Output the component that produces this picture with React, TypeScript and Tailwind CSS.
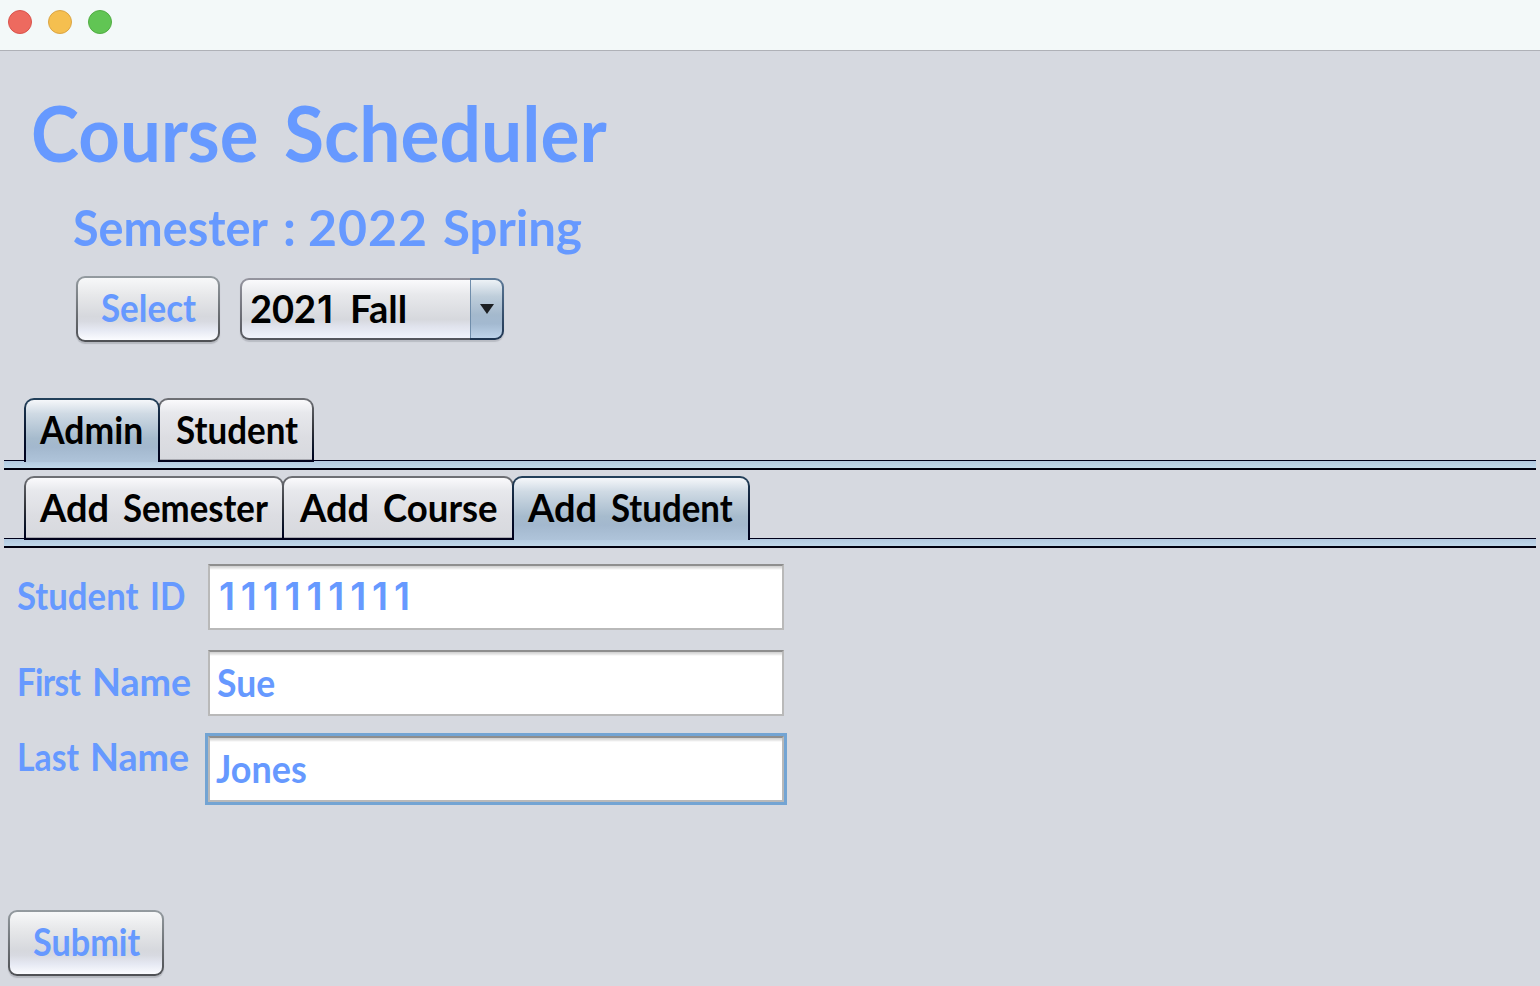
import React from "react";

type Piece = { text: string; cls: string };

function Words({ items }: { items: Piece[] }) {
  return (
    <span className="flex whitespace-pre">
      {items.map((p, i) => (
        <span key={i} className={`shrink-0 origin-left ${p.cls}`}>
          {p.text}
        </span>
      ))}
    </span>
  );
}

function PushButton({ children, className }: { children: React.ReactNode; className: string }) {
  return (
    <button
      className={`block h-[66px] rounded-[9px] bg-linear-to-b from-[#949ba0] to-[#4e5054] p-[2px] shadow-[0_2px_1px_#b5b8bf] ${className}`}
    >
      <span className="flex h-full items-start rounded-[7px] bg-[linear-gradient(#f7f8f9_0%,#e7e8ea_28%,#d6d8dd_62%,#d8dae1_70%,#e6e9f3_84%,#fbfcff_100%)] pl-[23px] leading-[59px] text-[#6699ff]">
        {children}
      </span>
    </button>
  );
}

function Tab({ items, selected, className }: { items: Piece[]; selected?: boolean; className: string }) {
  return (
    <div
      role="tab"
      className={`relative h-[64px] shrink-0 rounded-t-[10px] px-[2px] pt-[2px] ${
        selected
          ? "z-10 bg-linear-to-b from-[#23415b] via-[#0b1831] to-[#00001a]"
          : "bg-linear-to-b from-[#6f7176] via-[#303238] to-[#00001a] pb-[2px]"
      } ${className}`}
    >
      <div
        className={`h-full rounded-t-[8px] pl-[14px] leading-[59px] ${
          selected
            ? "bg-[linear-gradient(#f5f7fa_0%,#cfdae4_22%,#a6bbcd_62%,#a3b8ce_76%,#afc4da_100%)]"
            : "border-b border-[#a8a9b0] bg-[linear-gradient(#fafafc_0%,#e7e8ec_22%,#dcdde2_65%,#d7d9de_100%)]"
        }`}
      >
        <Words items={items} />
      </div>
    </div>
  );
}

function Band() {
  return (
    <div className="-mt-[2px] h-[10px] border-t border-b-2 border-t-[#00001a] border-b-[#00000f] bg-linear-to-b from-[#b3c9e0] to-[#c0d8ea]" />
  );
}

function Field({ items, focused }: { items: Piece[]; focused?: boolean }) {
  return (
    <div
      className={`h-[66px] w-[576px] border-2 border-[#b9b9b9] border-t-[#8e8e8e] bg-[linear-gradient(#cfcfcf_0px,#e3e3e3_2px,#ffffff_4px)] pl-[7px] leading-[60px] ${
        focused ? "outline-3 outline-[#73a4d3]" : ""
      }`}
    >
      <Words items={items} />
    </div>
  );
}

export default function App() {
  return (
    <div className="flex h-[986px] w-[1540px] flex-col overflow-hidden bg-[#d6d9e0] font-['Lato',sans-serif] text-[38px] font-bold text-black">
      <header className="flex h-[51px] shrink-0 gap-[16px] border-b border-[#afb1b7] bg-[#f3f9f9] pt-[10px] pl-[8px]">
        <i className="size-[24px] rounded-full border border-[#d9534c] bg-[#ed6a5f]" />
        <i className="size-[24px] rounded-full border border-[#dba544] bg-[#f5bf4f]" />
        <i className="size-[24px] rounded-full border border-[#51ad43] bg-[#61c554]" />
      </header>

      <h1 className="mt-[37px] h-[90px] shrink-0 pl-[31px] text-[76px] leading-[90px] text-[#6699ff]">
        <Words
          items={[
            { text: "Course", cls: "w-[253px] scale-x-[0.955]" },
            { text: "Scheduler", cls: "scale-x-[0.962]" },
          ]}
        />
      </h1>
      <h2 className="mt-[18px] h-[60px] shrink-0 pl-[73px] text-[50px] leading-[62px] text-[#6699ff]">
        <Words
          items={[
            { text: "Semester", cls: "w-[210px] scale-x-[0.936]" },
            { text: ":", cls: "w-[25px]" },
            { text: "2022", cls: "w-[135px] tracking-[1px]" },
            { text: "Spring", cls: "scale-x-[0.983]" },
          ]}
        />
      </h2>

      <div className="mt-[20px] flex h-[66px] shrink-0 items-center gap-[20px] pl-[76px]">
        <PushButton className="w-[144px]">
          <Words items={[{ text: "Select", cls: "scale-x-[0.92]" }]} />
        </PushButton>
        <div className="flex h-[62px] w-[264px] rounded-[9px] shadow-[0_2px_1px_#b9bcc4]">
          <div className="w-[230px] rounded-l-[9px] bg-linear-to-b from-[#95959f] to-[#53555c] py-[2px] pl-[2px]">
            <div className="h-full rounded-l-[7px] bg-[linear-gradient(#fafafc_0%,#e8e9ec_25%,#d6d8dd_68%,#e0e3ed_80%,#f1f3fb_100%)] pl-[8px] leading-[56px]">
              <Words
                items={[
                  { text: "202", cls: "w-[67px]" },
                  { text: "1", cls: "mt-[1px] w-[33px] font-['Inter'] font-semibold" },
                  { text: "Fall", cls: "" },
                ]}
              />
            </div>
          </div>
          <div className="w-[34px] rounded-r-[9px] bg-linear-to-b from-[#5d7a98] to-[#1d3450] py-[2px] pr-[2px]">
            <div className="flex h-full items-center justify-center rounded-r-[7px] border-l border-[#6f8dab] bg-[linear-gradient(#edf2f6_0%,#bfcedb_28%,#a4b9cd_60%,#a3b9d0_75%,#bdd3ea_100%)]">
              <svg width="14" height="10" viewBox="0 0 14 10">
                <path d="M0 0H14L7 10Z" fill="#1c1f22" />
              </svg>
            </div>
          </div>
        </div>
      </div>

      <div className="mt-[56px] flex shrink-0 flex-col px-[4px]">
        <div className="flex pl-[20px]" role="tablist">
          <Tab selected className="w-[136px]" items={[{ text: "Admin", cls: "scale-x-[0.935]" }]} />
          <Tab className="-ml-[2px] w-[156px]" items={[{ text: "Student", cls: "ml-[2px] scale-x-[0.92]" }]} />
        </div>
        <Band />
        <div className="mt-[6px] flex pl-[20px]" role="tablist">
          <Tab
            className="w-[260px]"
            items={[
              { text: "Add", cls: "w-[83px]" },
              { text: "Semester", cls: "scale-x-[0.915]" },
            ]}
          />
          <Tab
            className="-ml-[2px] w-[232px]"
            items={[
              { text: "Add", cls: "ml-[2px] w-[83px]" },
              { text: "Course", cls: "scale-x-[0.962]" },
            ]}
          />
          <Tab
            selected
            className="-ml-[2px] w-[238px]"
            items={[
              { text: "Add", cls: "w-[83px]" },
              { text: "Student", cls: "scale-x-[0.917]" },
            ]}
          />
        </div>
        <Band />
      </div>

      <form className="mt-[16px] grid shrink-0 grid-cols-[191px_576px] gap-y-[20px] pl-[17px] text-[#6699ff]">
        <label className="leading-[63px]">
          <Words
            items={[
              { text: "Student", cls: "w-[133px] scale-x-[0.915]" },
              { text: "ID", cls: "scale-x-[0.88]" },
            ]}
          />
        </label>
        <Field
          items={[{ text: "111111111", cls: "ml-[2px] font-['Inter'] font-semibold tracking-[5.8px]" }]}
        />
        <label className="leading-[63px]">
          <Words
            items={[
              { text: "First", cls: "w-[75px] scale-x-[0.875] tracking-[-0.8px]" },
              { text: "Name", cls: "scale-x-[0.99]" },
            ]}
          />
        </label>
        <Field items={[{ text: "Sue", cls: "scale-x-[0.935]" }]} />
        <label className="-mt-[12px] leading-[64px]">
          <Words
            items={[
              { text: "Last", cls: "w-[73px] scale-x-[0.888]" },
              { text: "Name", cls: "scale-x-[0.99]" },
            ]}
          />
        </label>
        <Field focused items={[{ text: "Jones", cls: "-ml-[1px] scale-x-[0.945]" }]} />
      </form>

      <div className="mt-[108px] pl-[8px]">
        <PushButton className="w-[156px]">
          <Words items={[{ text: "Submit", cls: "scale-x-[0.9]" }]} />
        </PushButton>
      </div>
    </div>
  );
}
